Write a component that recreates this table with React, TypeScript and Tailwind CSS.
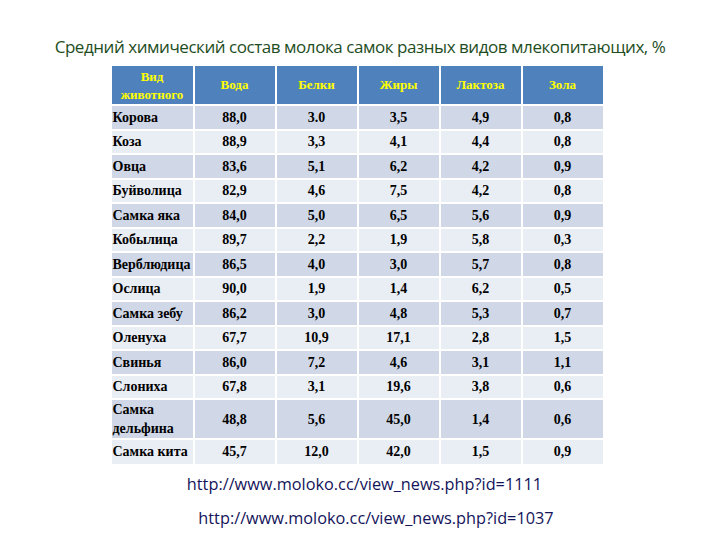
const head = ["Вода", "Белки", "Жиры", "Лактоза", "Зола"]

const rows: [string, string, string, string, string, string][] = [
    ["Корова", "88,0", "3.0", "3,5", "4,9", "0,8"],
    ["Коза", "88,9", "3,3", "4,1", "4,4", "0,8"],
    ["Овца", "83,6", "5,1", "6,2", "4,2", "0,9"],
    ["Буйволица", "82,9", "4,6", "7,5", "4,2", "0,8"],
    ["Самка яка", "84,0", "5,0", "6,5", "5,6", "0,9"],
    ["Кобылица", "89,7", "2,2", "1,9", "5,8", "0,3"],
    ["Верблюдица", "86,5", "4,0", "3,0", "5,7", "0,8"],
    ["Ослица", "90,0", "1,9", "1,4", "6,2", "0,5"],
    ["Самка зебу", "86,2", "3,0", "4,8", "5,3", "0,7"],
    ["Оленуха", "67,7", "10,9", "17,1", "2,8", "1,5"],
    ["Свинья", "86,0", "7,2", "4,6", "3,1", "1,1"],
    ["Слониха", "67,8", "3,1", "19,6", "3,8", "0,6"],
    ["Самка дельфина", "48,8", "5,6", "45,0", "1,4", "0,6"],
    ["Самка кита", "45,7", "12,0", "42,0", "1,5", "0,9"],
]

export default function App() {
    return (
        <div className="w-[720px] h-[540px] bg-white overflow-hidden flex flex-col items-center">
            <h1 className="mt-[36px] text-[17px] leading-[22px] text-[#1e4d1e] font-['Open_Sans',sans-serif] tracking-[-0.45px]">
                Средний химический состав молока самок разных видов млекопитающих, %
            </h1>
            <table className="mt-[8px] ml-[-6px] border-collapse font-['Liberation_Serif',serif] font-bold text-[14px] text-black">
                <thead>
                    <tr className="h-[39px] bg-[#4f81bd] text-[#ffff00] text-[13px] leading-[18px]">
                        <th className="w-[82px] pt-[1px] border-r-2 border-white font-bold">Вид<br />животного</th>
                        {head.map((h, i) => (
                            <th key={h} className={i === 4 ? "w-[81px] font-bold" : "w-[82px] border-r-2 border-white font-bold"}>{h}</th>
                        ))}
                    </tr>
                </thead>
                <tbody>
                    {rows.map((r, ri) => (
                        <tr
                            key={r[0]}
                            className={
                                (ri % 2 === 0 ? "bg-[#d0d8e8] " : "bg-[#e9edf4] ") +
                                (r[0] === "Самка дельфина" ? "h-[38px]" : "h-[24.5px]") +
                                " border-t-2 border-white"
                            }
                        >
                            <td className="pl-[1px] pr-[2px] leading-[19px] border-r-2 border-white whitespace-nowrap">
                                {r[0] === "Самка дельфина" ? <>Самка<br />дельфина</> : r[0]}
                            </td>
                            {r.slice(1).map((v, i) => (
                                <td key={i} className={"text-center " + (i === 4 ? "" : "border-r-2 border-white")}>{v}</td>
                            ))}
                        </tr>
                    ))}
                </tbody>
            </table>
            <div className="mt-[10px] ml-[9px] text-[16.3px] leading-[20px] text-[#14145a] font-['Open_Sans',sans-serif]">
                http://www.moloko.cc/view_news.php?id=1111
            </div>
            <div className="mt-[14px] ml-[32px] text-[16.3px] leading-[20px] text-[#14145a] font-['Open_Sans',sans-serif]">
                http://www.moloko.cc/view_news.php?id=1037
            </div>
        </div>
    )
}
